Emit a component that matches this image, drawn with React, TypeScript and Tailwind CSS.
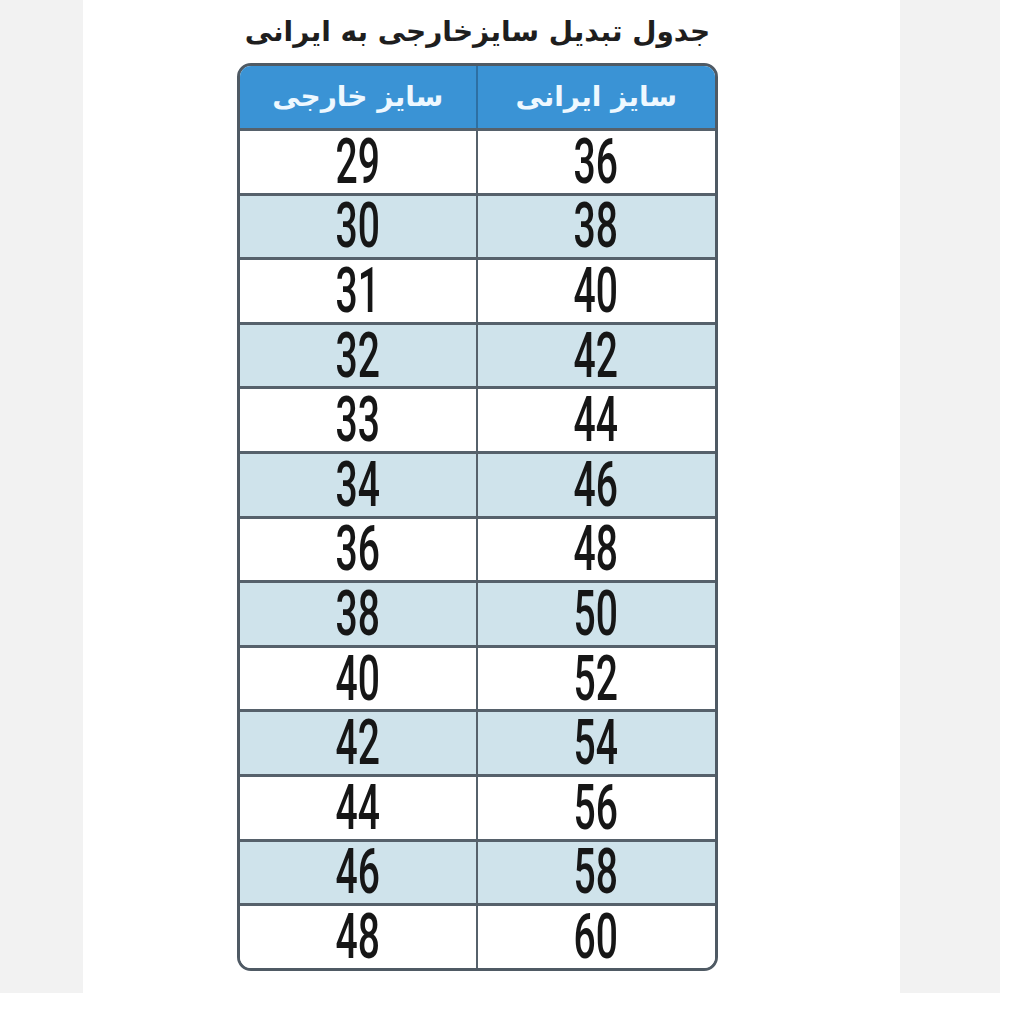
import React from "react";

const rows: [string, string][] = [
  ["29", "36"],
  ["30", "38"],
  ["31", "40"],
  ["32", "42"],
  ["33", "44"],
  ["34", "46"],
  ["36", "48"],
  ["38", "50"],
  ["40", "52"],
  ["42", "54"],
  ["44", "56"],
  ["46", "58"],
  ["48", "60"],
];

function Num({ v }: { v: string }) {
  return (
    <span
      className="inline-block scale-x-[0.62] text-[63px] leading-[46px] font-medium text-[#161616]"
      style={{ fontFamily: "Roboto, 'Liberation Sans', sans-serif" }}
    >
      {v}
    </span>
  );
}

export default function App() {
  return (
    <div className="w-[1024px] h-[1024px] bg-white">
      <div className="flex w-[1000px] h-[993px] bg-[#f2f2f2]">
        <div className="w-[83px] shrink-0" />
        <div className="w-[817px] h-full bg-white flex flex-col">
          <div className="ml-[154px] w-[481px] flex flex-col">
            <div
              dir="rtl"
              className="h-[63px] pt-[1px] flex items-center justify-center whitespace-nowrap text-[28px] font-bold text-[#1e1e1e]"
              style={{ fontFamily: "'DejaVu Sans', sans-serif" }}
            >
              جدول تبدیل سایزخارجی به ایرانی
            </div>
            <div className="border-[3px] border-[#4f5a64] rounded-[14px]">
              <div
                className="grid grid-cols-2 h-[62px] rounded-t-[11px] bg-[#3a93d5] text-[#eef8ff] text-[28px] font-bold"
                style={{ fontFamily: "'DejaVu Sans', sans-serif" }}
              >
                <div dir="rtl" className="flex items-center justify-center border-r-2 border-[#2d6fa3]">
                  سایز خارجی
                </div>
                <div dir="rtl" className="flex items-center justify-center">
                  سایز ایرانی
                </div>
              </div>
              {rows.map(([a, b], i) => (
                <div
                  key={i}
                  className={`grid grid-cols-2 h-[64.6px] border-t-[3px] border-[#56616b] ${
                    i % 2 === 1 ? "bg-[#cfe3eb]" : "bg-white"
                  } ${i === rows.length - 1 ? "rounded-b-[11px]" : ""}`}
                >
                  <div className="flex items-center justify-center border-r-2 border-[#56616b]">
                    <Num v={a} />
                  </div>
                  <div className="flex items-center justify-center">
                    <Num v={b} />
                  </div>
                </div>
              ))}
            </div>
          </div>
        </div>
        <div className="w-[100px] shrink-0" />
      </div>
    </div>
  );
}
